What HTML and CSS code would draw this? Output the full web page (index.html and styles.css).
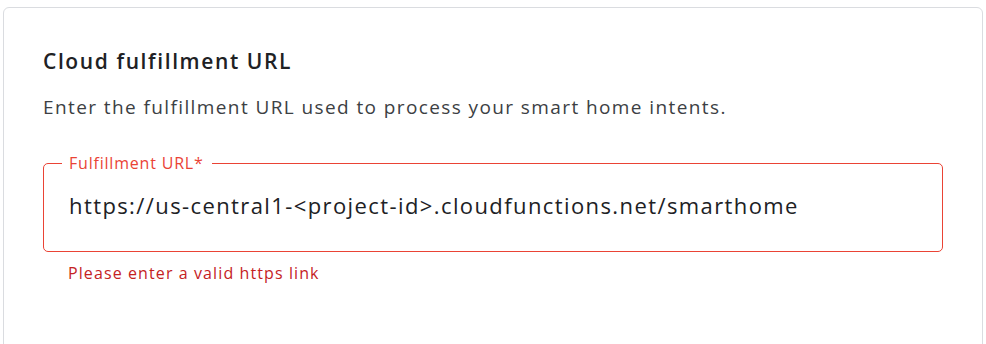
FILE: index.html
```html
<!DOCTYPE html>
<html>
<head>
<meta charset="utf-8">
<link rel="stylesheet" href="styles.css">
</head>
<body>
<div class="card">
  <h2 class="title">Cloud fulfillment URL</h2>
  <p class="desc">Enter the fulfillment URL used to process your smart home intents.</p>
  <fieldset class="field">
    <legend class="label">Fulfillment URL*</legend>
    <div class="value">https://us-central1-&lt;project-id&gt;.cloudfunctions.net/smarthome</div>
  </fieldset>
  <div class="error">Please enter a valid https link</div>
</div>
</body>
</html>
```
FILE: styles.css
```css
html, body {
  margin: 0;
  padding: 0;
  background: #ffffff;
}
body {
  font-family: "Open Sans", Roboto, sans-serif;
  color: #202124;
}
.card {
  margin: 7px 0 0 3px;
  width: 980px;
  height: 400px;
  border: 1px solid #dadce0;
  border-radius: 6px;
  box-sizing: border-box;
  padding: 39px 39px 0 39px;
}
.title {
  margin: 0;
  font-size: 21px;
  font-weight: 600;
  line-height: 28px;
  letter-spacing: 1.6px;
  color: #202124;
}
.desc {
  margin: 20px 0 0 0;
  font-size: 19px;
  line-height: 24px;
  letter-spacing: 1.4px;
  color: #3c4043;
}
.field {
  margin: 36px 0 0 0;
  padding: 0 25px;
  width: 900px;
  height: 97px;
  box-sizing: border-box;
  border: 1px solid #ea4335;
  border-radius: 5px;
}
.label {
  margin-left: -7px;
  padding: 0 8px 0 7px;
  font-size: 16px;
  line-height: 16px;
  letter-spacing: 0.8px;
  color: #ea4335;
}
.value {
  margin-top: 19px;
  font-size: 22px;
  line-height: 30px;
  letter-spacing: 1.4px;
  color: #202124;
}
.error {
  margin: 11px 0 0 25px;
  font-size: 16px;
  line-height: 20px;
  letter-spacing: 1.1px;
  color: #c5221f;
}
```
